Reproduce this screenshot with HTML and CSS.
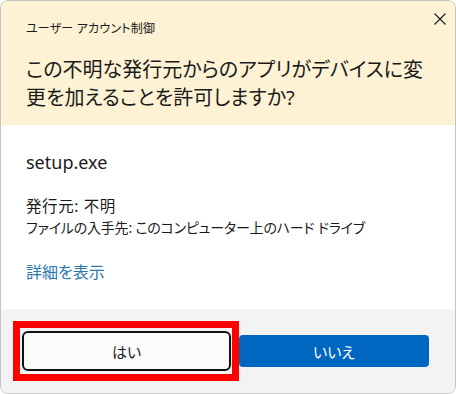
FILE: index.html
```html
<!DOCTYPE html>
<html lang="ja">
<head>
    <meta charset="UTF-8">
    <title>ユーザー アカウント制御</title>
    <link rel="stylesheet" href="styles.css">
</head>
<body>

<div class="dialog">
    <div class="header">
        <div class="titlebar">
            <span class="title">ユーザー アカウント制御</span>
            <span class="close">
                <svg width="12" height="12" viewBox="0 0 12 12">
                    <path d="M0.5 0.5 L11.5 11.5 M11.5 0.5 L0.5 11.5" stroke="#1a1a1a" stroke-width="1.1" fill="none"/>
                </svg>
            </span>
        </div>
        <div class="question">この不明な発行元からのアプリがデバイスに変<br>更を加えることを許可しますか?</div>
    </div>

    <div class="content">
        <div class="app-name">setup.exe</div>
        <div class="info">
            <div class="publisher">発行元: 不明</div>
            <div class="origin">ファイルの入手先: このコンピューター上のハード ドライブ</div>
        </div>
        <a class="details" href="#">詳細を表示</a>
    </div>

    <div class="footer">
        <div class="highlight">
            <button class="btn btn-yes">はい</button>
        </div>
        <button class="btn btn-no">いいえ</button>
    </div>
</div>

</body>
</html>
```

FILE: styles.css
```css
body {
    margin: 0;
    background: #ffffff;
    font-family: "Noto Sans", "Noto Sans CJK JP", sans-serif;
    font-feature-settings: "palt";
    color: #1b1b1b;
}
.dialog {
    width: 456px;
    height: 394px;
    box-sizing: border-box;
    border: 1px solid #c4c4c4;
    border-radius: 8px;
    overflow: hidden;
    display: flex;
    flex-direction: column;
    background: #ffffff;
}
.header {
    height: 124px;
    box-sizing: border-box;
    background: #fdf2d4;
    padding: 0 9px 0 25px;
}
.titlebar {
    display: flex;
    justify-content: space-between;
    align-items: flex-start;
    height: 43px;
}
.title {
    font-size: 12px;
    line-height: 16px;
    margin-top: 20px;
    letter-spacing: 0.2px;
}
.close {
    margin-top: 12px;
    display: flex;
}
.question {
    margin-top: 12px;
    font-size: 20px;
    line-height: 28px;
    white-space: nowrap;
}
.content {
    flex: 1;
    padding: 26px 25px 0;
}
.app-name {
    font-size: 18px;
    line-height: 22px;
}
.info {
    margin-top: 22px;
    line-height: 22px;
    white-space: nowrap;
}
.publisher {
    font-size: 15.5px;
    letter-spacing: 0.6px;
}
.origin {
    font-size: 14px;
    letter-spacing: -0.2px;
}
.details {
    display: inline-block;
    margin-top: 22px;
    font-size: 16px;
    line-height: 22px;
    color: #2a78b0;
    text-decoration: none;
}
.footer {
    height: 84px;
    flex-shrink: 0;
    background: #f3f3f3;
    display: flex;
    align-items: center;
    padding-left: 12px;
}
.highlight {
    border: 7px solid #ff0000;
    padding: 3px 1px 3px 2px;
    display: flex;
}
.btn {
    font-family: "Noto Sans CJK JP", sans-serif;
    font-feature-settings: "palt";
    font-size: 15px;
    box-sizing: border-box;
    cursor: pointer;
}
.btn-yes {
    width: 209px;
    height: 40px;
    background: #fbfbfb;
    color: #1b1b1b;
    border: 2px solid #111111;
    border-radius: 6px;
}
.btn-no {
    width: 190px;
    height: 32px;
    background: #0067c0;
    color: #ffffff;
    border: none;
    border-radius: 4px;
}
```
